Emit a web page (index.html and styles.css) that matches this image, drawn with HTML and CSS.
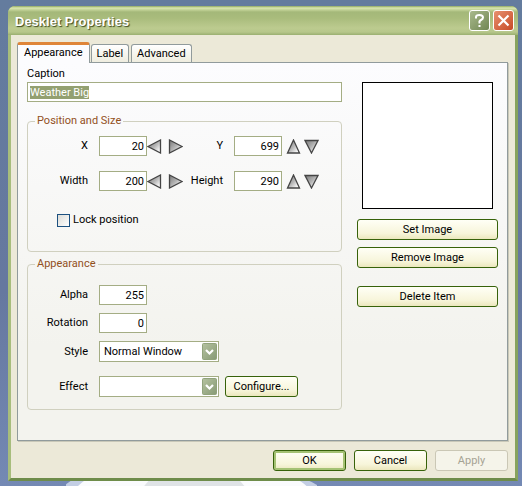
FILE: index.html
```html
<!DOCTYPE html>
<html lang="en">
<head>
<meta charset="utf-8">
<title>Desklet Properties</title>
<link rel="stylesheet" href="styles.css">
</head>
<body>
<svg class="wallpaper" viewBox="0 0 250 12" preserveAspectRatio="none" aria-hidden="true">
  <path d="M-2 12 Q2 8 10 4H236Q246 8 252 12Z" fill="#c3cee4"/>
  <path d="M12 12 Q16 8 22 4H228Q236 8 240 12Z" fill="#fafbfd"/>
  <path d="M78 12L84 5H172L178 12Z" fill="#dfe3e6"/>
</svg>
<main class="window">
  <header class="titlebar">
    <h1 class="title">Desklet Properties</h1>
    <button class="caption-button help" type="button" aria-label="Help">
      <svg viewBox="0 0 19 19"><path d="M6 7.5V6Q6 4 9.500 4T13 6.500Q13 8 11 9T9.500 12V12.500M9.500 14V16" fill="none" stroke="#fff" stroke-width="2"/></svg>
    </button>
    <button class="caption-button close" type="button" aria-label="Close">
      <svg viewBox="0 0 19 19"><path d="M4.500 4.500L14.500 14.500M14.500 4.500L4.500 14.500" fill="none" stroke="#fff" stroke-width="2.200"/></svg>
    </button>
  </header>
  <form class="content">
    <div class="tabs" role="tablist">
      <button class="tab active" type="button" role="tab" aria-selected="true">Appearance</button>
      <button class="tab" type="button" role="tab" aria-selected="false">Label</button>
      <button class="tab" type="button" role="tab" aria-selected="false">Advanced</button>
    </div>
    <section class="panel" role="tabpanel">
      <div class="settings">
        <label class="caption-label" for="caption">Caption</label>
        <input class="field" id="caption" type="text" value="Weather Big">
        <fieldset class="group">
          <legend>Position and Size</legend>
          <div class="position-grid">
            <label class="name" for="x">X</label>
            <input class="field number" id="x" type="text" value="20">
            <div class="steppers">
              <button class="step" type="button" aria-label="Decrease X"><svg viewBox="0 0 15 15"><use href="#arrow-left"/></svg></button>
              <button class="step" type="button" aria-label="Increase X"><svg viewBox="0 0 15 15"><use href="#arrow-right"/></svg></button>
            </div>
            <label class="name" for="y">Y</label>
            <input class="field number" id="y" type="text" value="699">
            <div class="steppers vertical">
              <button class="step" type="button" aria-label="Decrease Y"><svg viewBox="0 0 15 15"><use href="#arrow-up"/></svg></button>
              <button class="step" type="button" aria-label="Increase Y"><svg viewBox="0 0 15 15"><use href="#arrow-down"/></svg></button>
            </div>
            <label class="name" for="width">Width</label>
            <input class="field number" id="width" type="text" value="200">
            <div class="steppers">
              <button class="step" type="button" aria-label="Decrease width"><svg viewBox="0 0 15 15"><use href="#arrow-left"/></svg></button>
              <button class="step" type="button" aria-label="Increase width"><svg viewBox="0 0 15 15"><use href="#arrow-right"/></svg></button>
            </div>
            <label class="name" for="height">Height</label>
            <input class="field number" id="height" type="text" value="290">
            <div class="steppers vertical">
              <button class="step" type="button" aria-label="Decrease height"><svg viewBox="0 0 15 15"><use href="#arrow-up"/></svg></button>
              <button class="step" type="button" aria-label="Increase height"><svg viewBox="0 0 15 15"><use href="#arrow-down"/></svg></button>
            </div>
          </div>
          <label class="lock"><input class="checkbox" type="checkbox">Lock position</label>
        </fieldset>
        <fieldset class="group">
          <legend>Appearance</legend>
          <div class="rows">
            <div class="row">
              <label class="name" for="alpha">Alpha</label>
              <input class="field number" id="alpha" type="text" value="255">
            </div>
            <div class="row">
              <label class="name" for="rotation">Rotation</label>
              <input class="field number" id="rotation" type="text" value="0">
            </div>
            <div class="row">
              <label class="name" for="style">Style</label>
              <div class="dropdown">
                <select class="select" id="style"><option>Normal Window</option></select>
                <svg class="chevron" viewBox="0 0 15 17" aria-hidden="true"><use href="#chevron"/></svg>
              </div>
            </div>
            <div class="row effect-row">
              <label class="name" for="effect">Effect</label>
              <div class="dropdown">
                <select class="select" id="effect"><option></option></select>
                <svg class="chevron" viewBox="0 0 15 17" aria-hidden="true"><use href="#chevron"/></svg>
              </div>
              <button class="button" type="button">Configure...</button>
            </div>
          </div>
        </fieldset>
      </div>
      <aside class="image-column">
        <div class="preview"></div>
        <button class="button" type="button">Set Image</button>
        <button class="button" type="button">Remove Image</button>
        <button class="button delete" type="button">Delete Item</button>
      </aside>
    </section>
    <footer class="actions">
      <button class="button default" type="button">OK</button>
      <button class="button" type="button">Cancel</button>
      <button class="button" type="button" disabled>Apply</button>
    </footer>
  </form>
</main>
<svg class="symbols" aria-hidden="true">
  <defs>
    <linearGradient id="metal" x1="0" y1="0" x2="1" y2="1">
      <stop offset="0" stop-color="#777"/>
      <stop offset="0.500" stop-color="#b5b5b5"/>
      <stop offset="0.850" stop-color="#f8f8f8"/>
    </linearGradient>
    <linearGradient id="drop" x1="0" y1="0" x2="1" y2="1">
      <stop offset="0" stop-color="#b5c2a0"/>
      <stop offset="1" stop-color="#879a75"/>
    </linearGradient>
    <symbol id="arrow-left" viewBox="0 0 15 15"><path d="M1 7.500L13.500 1V14Z" fill="url(#metal)" stroke="#444" stroke-width="1.300"/></symbol>
    <symbol id="arrow-right" viewBox="0 0 15 15"><path d="M14 7.500L1.500 1V14Z" fill="url(#metal)" stroke="#444" stroke-width="1.300"/></symbol>
    <symbol id="arrow-up" viewBox="0 0 15 15"><path d="M7.500 1L13.500 14H1.500Z" fill="url(#metal)" stroke="#444" stroke-width="1.300"/></symbol>
    <symbol id="arrow-down" viewBox="0 0 15 15"><path d="M7.500 14L14 1.500H1Z" fill="url(#metal)" stroke="#444" stroke-width="1.300"/></symbol>
    <symbol id="chevron" viewBox="0 0 15 17"><rect x=".5" y=".5" width="14" height="16" rx="1" fill="url(#drop)" stroke="#91a37c"/><path d="M4 7L7.500 10.500L11 7" fill="none" stroke="#fff" stroke-width="2.200"/></symbol>
  </defs>
</svg>
<script src="script.js"></script>
</body>
</html>
```
FILE: script.js
```js
const caption = document.getElementById("caption");
caption.focus();
caption.select();
```
FILE: styles.css
```css
* {
  box-sizing: border-box;
}

body {
  display: flex;
  min-height: 100vh;
  margin: 0;
  padding: 6px 4px 5px 8px;
  background: linear-gradient(#647c9e, #66789f 60%, #7489b4);
  color: #000;
  font: 11px/16px Roboto, "Liberation Sans", sans-serif;
}

button,
input,
select {
  margin: 0;
  padding: 0;
  color: inherit;
  font: inherit;
}

svg {
  display: block;
}

.symbols {
  position: absolute;
  width: 0;
  height: 0;
}

.wallpaper {
  position: absolute;
  bottom: 0;
  left: 66px;
  width: 48%;
  height: 12px;
}

.window {
  position: relative;
  display: flex;
  flex: 1;
  flex-direction: column;
  border: 3px solid #a7bd7c;
  border-top: 0;
  border-right-color: #87a35e;
  border-bottom-color: #6e8c4a;
  border-radius: 7px 7px 0 0;
  background: #ece9d8;
}

.titlebar {
  display: flex;
  align-items: center;
  gap: 3px;
  height: 29px;
  margin: 0 -3px;
  padding: 0 4px 0 7px;
  border-radius: 7px 7px 0 0;
  background: linear-gradient(#8fa75f, #dbe8b0 2px, #a4b879 6px, #a9bc7c 12px, #bccb8f 22px, #b7c78b 26px, #9aaf70);
}

.title {
  flex: 1;
  margin: 0;
  padding-top: 3px;
  color: #fff;
  font-family: "Liberation Sans", sans-serif;
  font-size: 13px;
  font-weight: 700;
  line-height: 16px;
  text-shadow: 1px 1px 1px #3c4a20;
}

.caption-button {
  width: 21px;
  height: 21px;
  border: 1px solid #fff;
  border-radius: 3px;
}

.help {
  background: linear-gradient(135deg, #a8b98c, #718753);
}

.close {
  background: linear-gradient(135deg, #e79170, #c84a26);
}

.content {
  display: flex;
  flex: 1;
  flex-direction: column;
  padding: 7px 7px 7px 6px;
}

.tabs {
  display: flex;
  align-items: flex-end;
  gap: 2px;
}

.tab {
  height: 18px;
  padding: 0 5px;
  border: 1px solid #919b9c;
  border-bottom: 0;
  border-radius: 3px 3px 0 0;
  background: linear-gradient(#fff, #efeddf);
}

.tab.active {
  position: relative;
  height: 21px;
  margin: 0 -1px -1px 0;
  padding: 0 6px 2px;
  border-top: 3px solid #df8538;
  background: #fcfcfe;
}

.panel {
  display: grid;
  flex: 1;
  grid-template-columns: 1fr 141px;
  gap: 15px;
  padding: 3px 9px;
  border: 1px solid #919b9c;
  box-shadow: 1px 1px 0 #c9c8b8;
  background: linear-gradient(#fcfcfe, #f3f3ee 75%);
}

.caption-label {
  display: block;
}

.field {
  display: block;
  width: 100%;
  height: 20px;
  padding: 0 2px;
  border: 1px solid #a4ad84;
  border-radius: 0;
  outline: 0;
  background: #fff;
}

.field::selection {
  background: #93a070;
  color: #fff;
}

.number {
  width: 48px;
  text-align: right;
}

.group {
  min-width: 0;
  margin: 11px 0 0;
  padding: 0;
  border: 1px solid #d0d0bf;
  border-radius: 4px;
}

.group + .group {
  margin-top: 4px;
}

.group legend {
  margin-left: 7px;
  padding: 0 2px;
  color: #92501c;
}

.position-grid {
  display: grid;
  grid-template-columns: 71px 48px 38px 49px 48px auto;
  align-items: center;
  row-gap: 15px;
  padding-top: 7px;
}

.name {
  padding-right: 11px;
  text-align: right;
}

.steppers {
  display: flex;
  gap: 6px;
}

.steppers.vertical {
  gap: 3px;
  padding-left: 4px;
}

.step {
  width: 15px;
  height: 15px;
  border: 0;
  background: none;
}

.lock {
  display: flex;
  align-items: center;
  gap: 3px;
  margin: 21px 0 23px 29px;
}

.checkbox {
  width: 13px;
  height: 13px;
  border: 1px solid #1c5180;
  appearance: none;
  background: linear-gradient(135deg, #dcdcd7, #fff);
}

.rows {
  display: flex;
  flex-direction: column;
  gap: 8px;
  padding: 13px 0 12px;
}

.row {
  display: flex;
  align-items: center;
}

.row .name {
  width: 71px;
}

.effect-row {
  margin-top: 6px;
}

.dropdown {
  position: relative;
  width: 120px;
  margin-right: 6px;
}

.select {
  display: block;
  width: 100%;
  height: 21px;
  padding: 0 18px 0 4px;
  border: 1px solid #a4ad84;
  border-radius: 0;
  appearance: none;
  background: #fff;
}

.chevron {
  position: absolute;
  top: 2px;
  right: 2px;
  width: 15px;
  height: 17px;
  pointer-events: none;
}

.button {
  width: 73px;
  height: 21px;
  border: 1px solid #37620a;
  border-radius: 3px;
  background: linear-gradient(#fffff6, #f7f5da 70%, #ebe7bd);
}

.image-column {
  display: flex;
  flex-direction: column;
  gap: 7px;
  padding-top: 16px;
}

.image-column .button {
  width: 100%;
}

.image-column .delete {
  margin-top: 11px;
}

.preview {
  height: 127px;
  margin: 0 5px 3px;
  border: 1px solid #000;
  background: #fff;
}

.actions {
  display: flex;
  justify-content: flex-end;
  gap: 8px;
  padding-top: 9px;
}

.default {
  box-shadow: inset 0 0 0 2px #a5c274;
}

.button:disabled {
  border-color: #cac7b5;
  background: #f5f4ea;
  color: #a5a394;
}
```
